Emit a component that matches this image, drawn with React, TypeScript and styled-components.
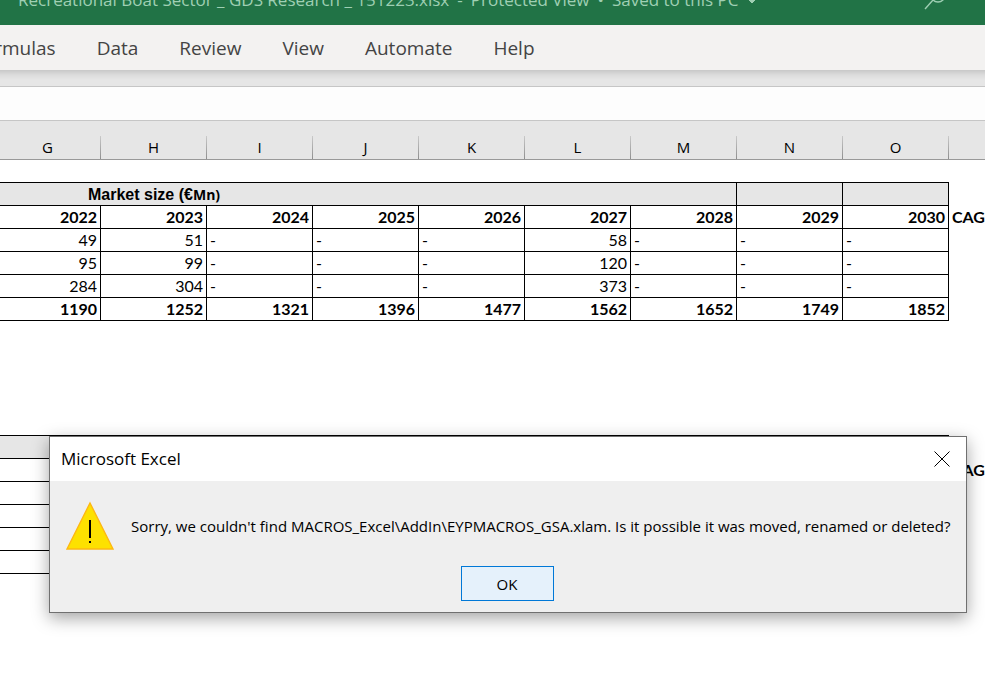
import React from "react";
import styled, { createGlobalStyle } from "styled-components";

const UI_FONT = `"Open Sans", "Noto Sans", sans-serif`;
const CELL_FONT = `Lato, "Open Sans", sans-serif`;

const GlobalStyle = createGlobalStyle`
  *, *::before, *::after { box-sizing: border-box; }
  body { margin: 0; background: #fff; font-family: ${UI_FONT}; color: #000; overflow: hidden; }
  button, input { font-family: inherit; border-radius: 0; }
`;

const Window = styled.div`
  position: relative;
  display: flex;
  flex-direction: column;
  min-height: 100vh;
  overflow: hidden;
`;

const TitleBar = styled.header`
  display: flex;
  align-items: flex-end;
  justify-content: space-between;
  height: 25px;
  padding: 0 40px 12px 18px;
  overflow: hidden;
  background: #217346;
  color: #9fcfb3;
  font-size: 17px;
  line-height: 26px;
  white-space: nowrap;
`;

const FileInfo = styled.div`
  display: flex;
  align-items: center;
  gap: 8px;
`;

const SavedState = styled.span`
  display: flex;
  align-items: center;
  gap: 8px;
`;

const SearchIcon = styled.svg`
  flex: none;
  width: 24px;
  height: 28px;
`;

const Tabs = styled.nav`
  display: flex;
  align-items: center;
  gap: 41px;
  height: 45px;
  margin-left: -27px;
  background: #f3f2f1;
`;

const Tab = styled.button`
  padding: 0;
  border: 0;
  background: none;
  color: #444;
  font-size: 19px;
  line-height: 26px;
`;

const RibbonShadow = styled.div`
  height: 16px;
  background: linear-gradient(#c8c8c8, #dcdcdc 5px, #e6e6e6 10px);
`;

const FormulaBar = styled.input`
  width: 100%;
  height: 35px;
  padding: 0 8px;
  border: solid #c6c6c6;
  border-width: 1px 0;
  outline: 0;
  background: #fdfdfd;
  font-size: 16px;
`;

const ColumnHeadings = styled.div`
  display: flex;
  align-items: flex-end;
  height: 39px;
  margin-left: -5px;
  border-bottom: 1px solid #999;
  background: #e6e6e6;
  overflow: hidden;
`;

const Heading = styled.div`
  flex: none;
  width: 106px;
  height: 23px;
  border-right: 1px solid;
  border-image: linear-gradient(#ccc, #8c8c8c) 1;
  font-size: 15px;
  line-height: 23px;
  text-align: center;
`;

const Sheet = styled.main`
  flex: 1;
  display: flex;
  flex-direction: column;
  gap: 114px;
  padding-top: 22px;
  margin-left: -5px;
  overflow: hidden;
`;

const Block = styled.table`
  table-layout: fixed;
  width: 1060px;
  border-collapse: separate;
  border-spacing: 0;
  font-family: ${CELL_FONT};
  font-size: 16px;
  line-height: 22px;
`;

const Cell = styled.td<{ $bold?: boolean; $left?: boolean; $shaded?: boolean; $top?: boolean }>`
  height: ${(p) => (p.$top ? 24 : 23)}px;
  padding: 0 3px;
  border: solid #000;
  border-width: ${(p) => (p.$top ? "1px" : "0")} 1px 1px 0;
  background: ${(p) => (p.$shaded ? "#e6e6e6" : "#fff")};
  font-weight: ${(p) => (p.$bold ? 700 : 400)};
  text-align: ${(p) => (p.$left ? "left" : "right")};
  white-space: nowrap;
`;

const OpenCell = styled.td`
  padding: 0 3px;
  border-bottom: 1px solid transparent;
  font-weight: 700;
  white-space: nowrap;
`;

const TitleCell = styled(Cell)`
  padding: 2px 3px 0 93px;
  font-family: "Liberation Sans", Arial, sans-serif;
  line-height: 20px;
`;

const Unit = styled.span`
  font-family: ${UI_FONT};
  font-size: 14px;
  line-height: 16px;
`;

const Dialog = styled.section`
  position: absolute;
  top: 436px;
  left: 49px;
  right: 18px;
  border: 1px solid #707070;
  background: #efefef;
  box-shadow: 0 5px 16px rgba(0, 0, 0, 0.36);
`;

const DialogHeader = styled.div`
  display: flex;
  align-items: center;
  justify-content: space-between;
  height: 44px;
  padding: 0 16px 0 11px;
  background: #fff;
`;

const DialogTitle = styled.h1`
  margin: 0;
  font-size: 17px;
  line-height: 24px;
  font-weight: 400;
`;

const CloseButton = styled.button`
  display: flex;
  padding: 0;
  border: 0;
  background: none;
`;

const DialogBody = styled.div`
  display: flex;
  align-items: center;
  gap: 16px;
  padding: 20px 12px 0 16px;
`;

const WarningIcon = styled.svg`
  flex: none;
  width: 49px;
  height: 49px;
`;

const Message = styled.p`
  margin: 0;
  font-size: 15px;
  line-height: 22px;
  white-space: nowrap;
`;

const DialogActions = styled.div`
  display: flex;
  justify-content: center;
  padding: 16px 2px 11px 0;
`;

const OkButton = styled.button`
  width: 93px;
  height: 35px;
  padding: 0;
  border: 1px solid #0078d7;
  background: #e5f1fb;
  color: #000;
  font-size: 15px;
`;

const tabs = ["Formulas", "Data", "Review", "View", "Automate", "Help"];
const columns = ["G", "H", "I", "J", "K", "L", "M", "N", "O"];
const years = [2022, 2023, 2024, 2025, 2026, 2027, 2028, 2029, 2030];
const values = [
  ["49", "51", "-", "-", "-", "58", "-", "-", "-"],
  ["95", "99", "-", "-", "-", "120", "-", "-", "-"],
  ["284", "304", "-", "-", "-", "373", "-", "-", "-"],
];
const totals = [1190, 1252, 1321, 1396, 1477, 1562, 1652, 1749, 1852];
const emptyRows = [0, 1, 2, 3];

export default function App() {
  return (
    <Window>
      <GlobalStyle />
      <TitleBar>
        <FileInfo>
          <span>Recreational Boat Sector _ GDS Research _ 151223.xlsx</span>
          <span>-</span>
          <SavedState>
            <span>Protected View</span>
            <span>•</span>
            <span>Saved to this PC</span>
            <svg width="12" height="7" viewBox="0 0 12 7" aria-hidden="true">
              <path d="M1 1h10L6 6z" fill="currentColor" stroke="currentColor" strokeLinejoin="round" />
            </svg>
          </SavedState>
        </FileInfo>
        <SearchIcon viewBox="0 0 24 28" fill="none" stroke="currentColor" strokeWidth="1.4" aria-hidden="true">
          <circle cx="17" cy="10" r="7" />
          <path d="M12 15L4 24" />
        </SearchIcon>
      </TitleBar>
      <Tabs>
        {tabs.map((t) => (
          <Tab key={t} type="button">{t}</Tab>
        ))}
      </Tabs>
      <RibbonShadow />
      <FormulaBar type="text" aria-label="Formula bar" />
      <ColumnHeadings>
        {columns.map((c) => (
          <Heading key={c}>{c}</Heading>
        ))}
      </ColumnHeadings>
      <Sheet>
        <Block>
          <tbody>
            <tr>
              <TitleCell colSpan={7} $top $shaded $bold $left>
                Market size (€<Unit>Mn)</Unit>
              </TitleCell>
              <Cell $top $shaded />
              <Cell $top $shaded />
              <OpenCell />
            </tr>
            <tr>
              {years.map((y) => <Cell key={y} $bold>{y}</Cell>)}
              <OpenCell>CAGR</OpenCell>
            </tr>
            {values.map((row, r) => (
              <tr key={r}>
                {row.map((v, i) => <Cell key={i} $left={v === "-"}>{v}</Cell>)}
              </tr>
            ))}
            <tr>
              {totals.map((t) => <Cell key={t} $bold>{t}</Cell>)}
            </tr>
          </tbody>
        </Block>
        <Block>
          <tbody>
            <tr>
              <Cell colSpan={7} $top $shaded />
              <Cell $top $shaded />
              <Cell $top $shaded />
              <OpenCell />
            </tr>
            <tr>
              {columns.map((c) => <Cell key={c} />)}
              <OpenCell>CAGR</OpenCell>
            </tr>
            {emptyRows.map((r) => (
              <tr key={r}>
                {columns.map((c) => <Cell key={c} />)}
              </tr>
            ))}
          </tbody>
        </Block>
      </Sheet>
      <Dialog role="alertdialog" aria-labelledby="dialog-title" aria-describedby="dialog-message">
        <DialogHeader>
          <DialogTitle id="dialog-title">Microsoft Excel</DialogTitle>
          <CloseButton type="button" aria-label="Close">
            <svg width="16" height="16" viewBox="0 0 16 16" stroke="#000" strokeWidth="1">
              <path d="M.5.5l15 15M15.500.5l-15 15" />
            </svg>
          </CloseButton>
        </DialogHeader>
        <DialogBody>
          <WarningIcon viewBox="0 0 49 49" aria-hidden="true">
            <path d="M24 2L47 48H1z" fill="#fde100" stroke="#fdb813" strokeWidth="1.4" />
            <path d="M23 19h2v18h-2zM23 40h2v2h-2z" fill="#000" />
          </WarningIcon>
          <Message id="dialog-message">
            Sorry, we couldn't find MACROS_Excel\AddIn\EYPMACROS_GSA.xlam. Is it possible it was moved, renamed or deleted?
          </Message>
        </DialogBody>
        <DialogActions>
          <OkButton type="button">OK</OkButton>
        </DialogActions>
      </Dialog>
    </Window>
  );
}
